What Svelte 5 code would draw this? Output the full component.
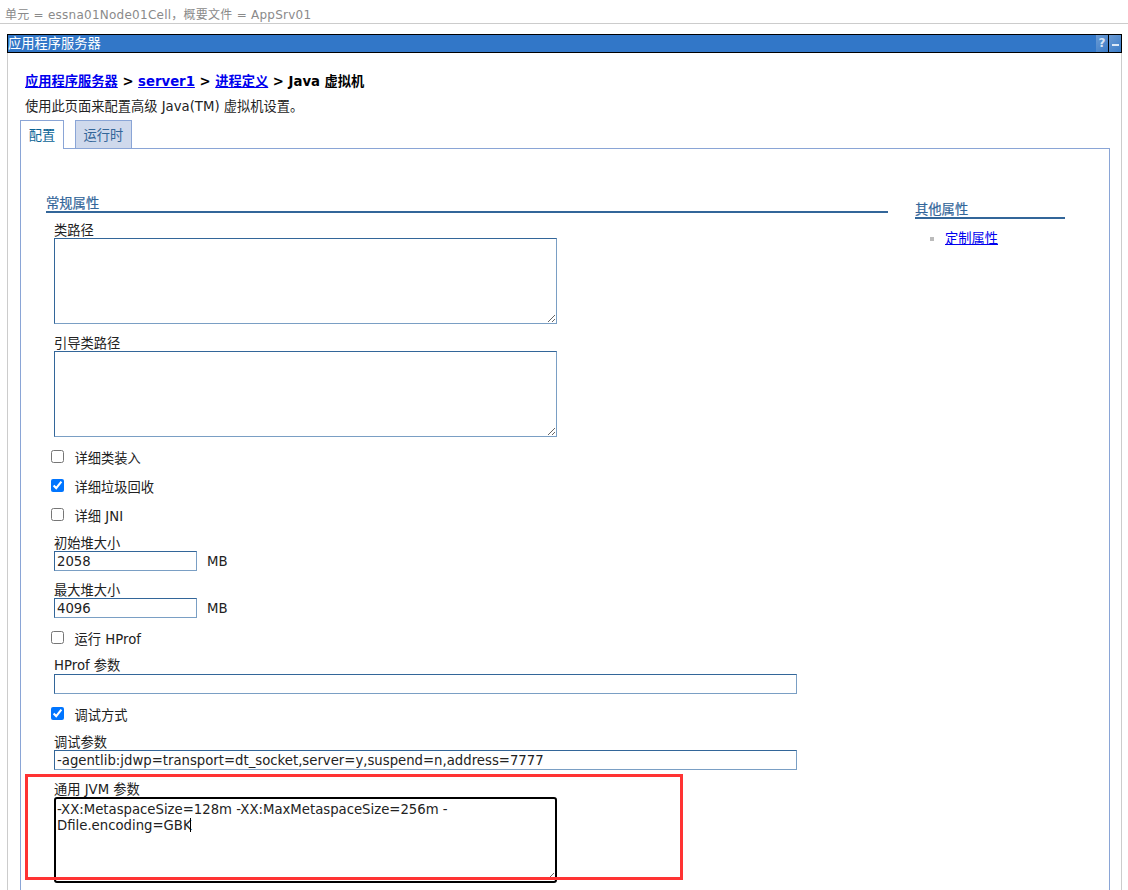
<script>
	const jvmArgs = "-XX:MetaspaceSize=128m -XX:MaxMetaspaceSize=256m -Dfile.encoding=GBK";
	const debugArgs = "-agentlib:jdwp=transport=dt_socket,server=y,suspend=n,address=7777";
</script>

<div class="page">
	<div class="scope">单元 = essna01Node01Cell，概要文件 = AppSrv01</div>

	<div class="panel">
		<div class="titlebar">
			<span class="title">应用程序服务器</span>
			<span class="tool help">?</span>
			<span class="tool min"><i></i></span>
		</div>

		<div class="body">
			<div class="crumbs">
				<a href="#a">应用程序服务器</a> &gt; <a href="#b">server1</a> &gt; <a href="#c">进程定义</a> &gt; Java 虚拟机
			</div>
			<p class="desc">使用此页面来配置高级 Java(TM) 虚拟机设置。</p>

			<div class="tabs">
				<div class="tab active">配置</div>
				<div class="tab">运行时</div>
			</div>

			<div class="tabbox">
				<div class="main">
					<h3 class="section">常规属性</h3>
					<div class="fields">
						<label class="lbl first" for="cp">类路径</label>
						<textarea id="cp" class="area"></textarea>

						<label class="lbl second" for="bcp">引导类路径</label>
						<textarea id="bcp" class="area"></textarea>

						<label class="check c1"><input type="checkbox" />详细类装入</label>
						<label class="check"><input type="checkbox" checked />详细垃圾回收</label>
						<label class="check"><input type="checkbox" />详细 JNI</label>

						<label class="lbl heap" for="ih">初始堆大小</label>
						<div class="sized"><input id="ih" class="text short" value="2058" /><span>MB</span></div>
						<label class="lbl heap" for="mh">最大堆大小</label>
						<div class="sized"><input id="mh" class="text short" value="4096" /><span>MB</span></div>

						<label class="check"><input type="checkbox" />运行 HProf</label>
						<label class="lbl hprof" for="hp">HProf 参数</label>
						<input id="hp" class="text wide" />

						<label class="check"><input type="checkbox" checked />调试方式</label>
						<label class="lbl debug" for="da">调试参数</label>
						<input id="da" class="text wide tight" value={debugArgs} />

						<div class="jvm">
							<label class="lbl" for="ja">通用 JVM 参数</label>
							<div class="jvmwrap">
								<textarea id="ja" class="area focused" value={jvmArgs}></textarea>
								<span class="caret"></span>
							</div>
							<div class="marker"></div>
						</div>
					</div>
				</div>

				<aside class="side">
					<h3 class="section">其他属性</h3>
					<ul>
						<li><a href="#d">定制属性</a></li>
					</ul>
				</aside>
			</div>
		</div>
	</div>
</div>

<style>
	:global(body) {
		margin: 0;
		background: white;
		overflow: hidden;
	}

	.page {
		height: 890px;
		overflow: hidden;
		font-family: "DejaVu Sans", "Noto Sans CJK SC", sans-serif;
		font-size: 13.25px;
		color: #222;
	}

	.scope {
		height: 24px;
		box-sizing: border-box;
		padding: 7px 0 0 5px;
		font-size: 12px;
		letter-spacing: 0.25px;
		line-height: 16px;
		color: #8a8a8a;
		border-bottom: 1px solid #ccc;
	}

	.panel {
		margin: 10px 6px 0 7px;
		border-left: 1px solid #ccc;
		border-right: 1px solid #ccc;
	}

	.titlebar {
		margin: 0 -1px;
		height: 19px;
		box-sizing: border-box;
		display: flex;
		align-items: stretch;
		background: #3277c8;
		border: 1px solid #000;
		color: white;
	}

	.title {
		flex: 1;
		line-height: 17px;
	}

	.tool {
		width: 12px;
		background: linear-gradient(135deg, #6c9bd4, #3a7cc8);
		color: #d8e6f6;
		font-weight: bold;
		font-size: 12px;
		line-height: 17px;
		text-align: center;
	}

	.help {
		border-right: 1px solid #000;
	}

	.min {
		display: flex;
		align-items: center;
		justify-content: center;
	}

	.min i {
		display: block;
		width: 7px;
		height: 2px;
		margin-top: 3px;
		background: #dce8f6;
	}

	.body {
		padding: 21px 11px 0 12px;
	}

	.crumbs {
		margin-left: 5px;
		line-height: 16px;
		font-weight: bold;
		color: #000;
	}

	a {
		color: #0000ee;
	}

	.desc {
		margin: 9px 0 0 5px;
		line-height: 16px;
		color: #222;
	}

	.tabs {
		display: flex;
		gap: 11px;
		margin-top: 5px;
		position: relative;
		z-index: 1;
		height: 29px;
	}

	.tab {
		box-sizing: border-box;
		width: 57px;
		height: 28px;
		padding-top: 7px;
		text-align: center;
		border: 1px solid #8aa5d6;
		border-bottom: none;
		background: #cfd9ec;
		color: #336699;
		line-height: 16px;
	}

	.tab.active {
		width: 44px;
		height: 29px;
		background: white;
		color: #0b6496;
	}

	.tabbox {
		display: flex;
		margin-top: -1px;
		height: 760px;
		border: 1px solid #8aa5d6;
		padding: 46px 0 0 25px;
	}

	.main {
		width: 842px;
	}

	.section {
		margin: 0;
		padding-top: 2px;
		font-size: 13.3px;
		font-weight: normal;
		line-height: 14px;
		color: #33669a;
		-webkit-text-stroke: 0.2px #33669a;
		border-bottom: 2px solid #336699;
	}

	.fields {
		display: flex;
		flex-direction: column;
		align-items: flex-start;
		padding-left: 8px;
	}

	.lbl {
		display: block;
		line-height: 16px;
		color: #222;
	}

	.lbl.first { margin-top: 10px; }
	.lbl.second { margin-top: 12px; }
	.lbl.heap { margin-top: 12px; }
	.lbl.hprof { margin-top: 11px; }
	.lbl.debug { margin-top: 12px; }

	.area {
		display: block;
		box-sizing: border-box;
		width: 503px;
		height: 86px;
		margin: -1px 0 0;
		border: 1px solid #336699;
		border-right-color: #7a9fc4;
		border-bottom-color: #7a9fc4;
		padding: 2px;
		font: inherit;
		color: #222;
	}

	.check {
		display: flex;
		align-items: center;
		height: 16px;
		line-height: 16px;
		margin-top: 14px;
		margin-bottom: -1px;
		margin-left: -3px;
		color: #222;
	}

	.check input {
		width: 13px;
		height: 13px;
		margin: -5px 10.6px 0 0;
	}

	.sized {
		display: flex;
		align-items: center;
		gap: 10px;
		margin-top: -1px;
	}

	.text {
		display: block;
		box-sizing: border-box;
		height: 20px;
		margin: 0;
		border: 1px solid #336699;
		border-right-color: #7a9fc4;
		border-bottom-color: #7a9fc4;
		padding: 0 2px;
		font: inherit;
		color: #222;
		background: white;
	}

	.short { width: 143px; }

	.wide {
		width: 743px;
	}

	.tight {
		margin-top: -1px;
	}

	.jvm {
		position: relative;
		margin-top: 12px;
	}

	.jvmwrap {
		position: relative;
		margin-top: -1px;
	}

	.focused {
		height: 86px;
		border: 2px solid #000;
		border-radius: 3px;
		margin: 0;
		padding: 3px 1px 1px;
		line-height: 16px;
	}

	.caret {
		position: absolute;
		left: 136px;
		top: 21px;
		width: 1px;
		height: 14px;
		background: #000;
	}

	.marker {
		position: absolute;
		left: -29px;
		top: -8px;
		width: 658px;
		height: 106px;
		box-sizing: border-box;
		border: 3px solid #f33;
		pointer-events: none;
	}

	.side {
		width: 150px;
		margin: 6px 0 0 27px;
	}

	ul {
		margin: 12px 0 0;
		padding: 0 0 0 30px;
		list-style: none;
	}

	li {
		position: relative;
		line-height: 16px;
	}

	li::before {
		content: "";
		position: absolute;
		left: -15px;
		top: 6px;
		width: 4px;
		height: 4px;
		background: #bbb;
	}
</style>
